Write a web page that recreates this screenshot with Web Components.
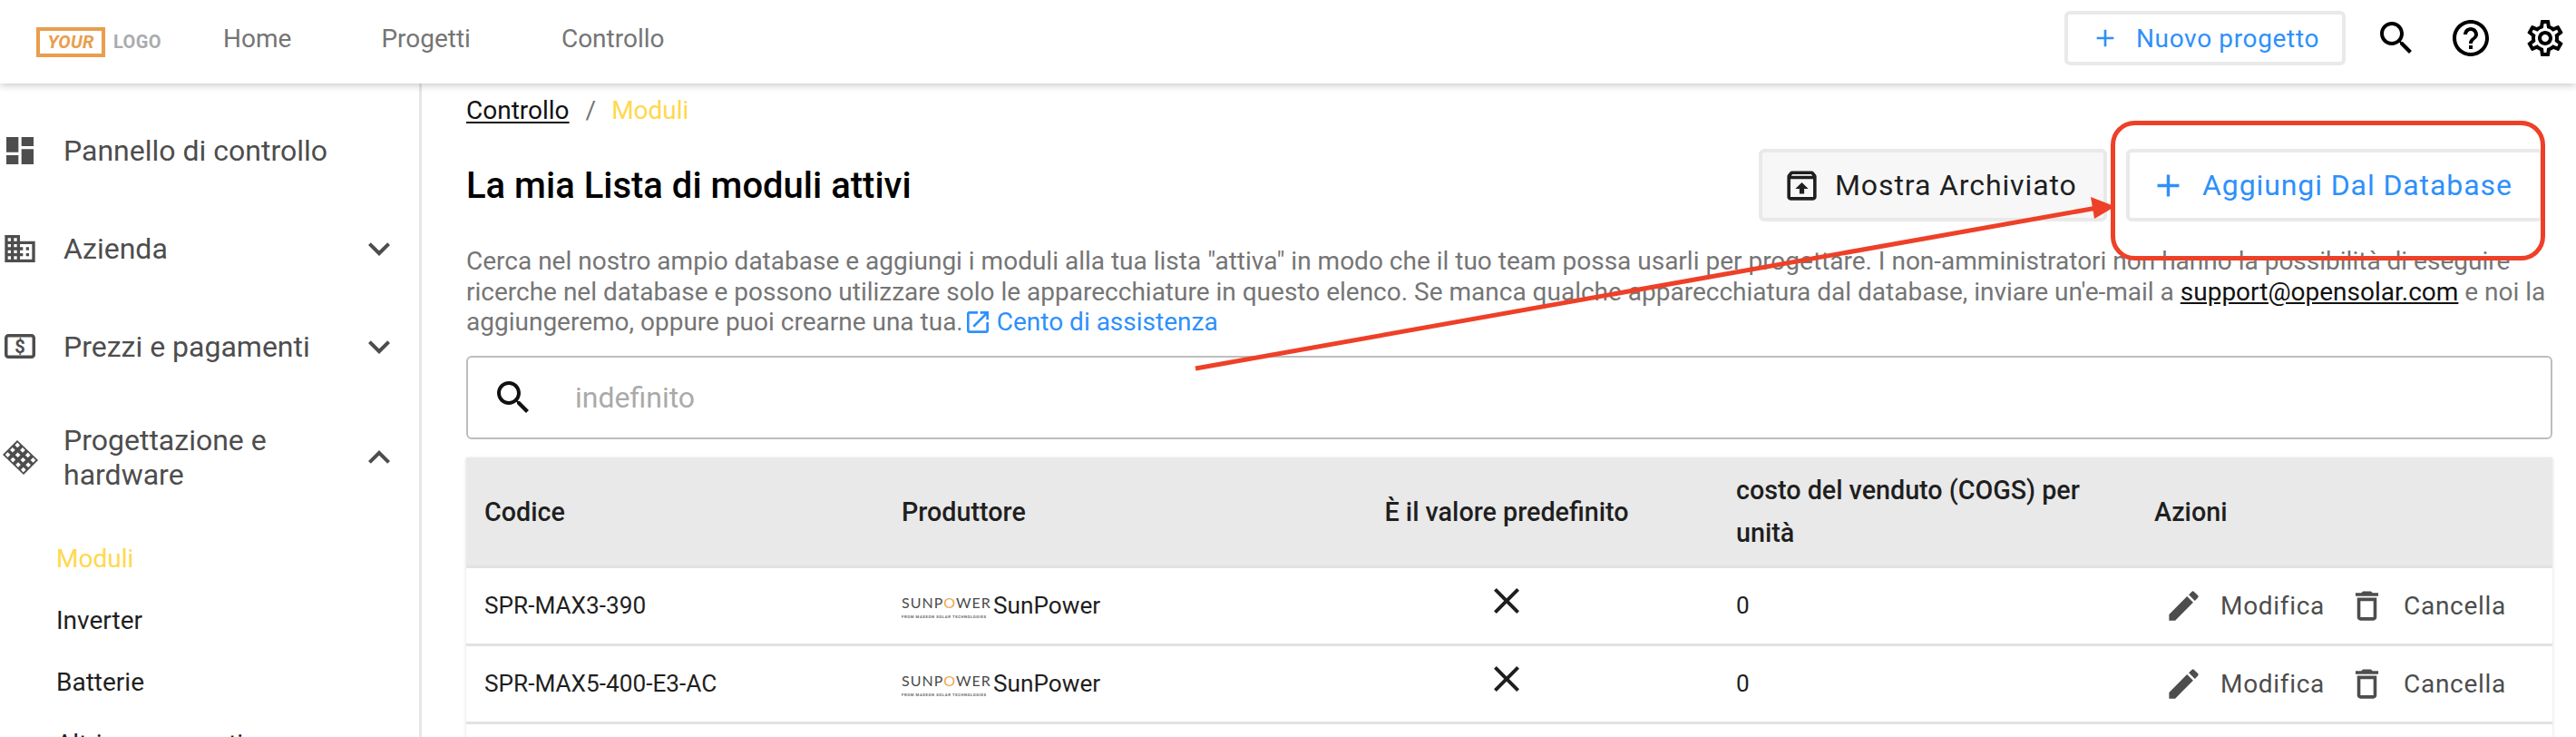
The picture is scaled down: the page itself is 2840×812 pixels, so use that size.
<!DOCTYPE html>
<html><head><meta charset="utf-8"><style>
html,body{margin:0;padding:0;background:#fff;height:812px;overflow:hidden}
body{font-family:Roboto,"Liberation Sans",sans-serif}
</style></head><body>
<app-shell></app-shell>
<script>
const I={
 plus:'<path d="M19 13h-6v6h-2v-6H5v-2h6V5h2v6h6v2z"/>',
 search:'<path d="M15.5 14h-.79l-.28-.27C15.41 12.59 16 11.11 16 9.5 16 5.91 13.09 3 9.5 3S3 5.91 3 9.5 5.91 16 9.5 16c1.61 0 3.09-.59 4.23-1.57l.27.28v.79l5 4.99L20.49 19l-4.99-5zm-6 0C7.01 14 5 11.99 5 9.5S7.01 5 9.5 5 14 7.01 14 9.5 11.99 14 9.5 14z"/>',
 help:'<path d="M11 18h2v-2h-2v2zm1-16C6.48 2 2 6.48 2 12s4.48 10 10 10 10-4.48 10-10S17.52 2 12 2zm0 18c-4.41 0-8-3.59-8-8s3.59-8 8-8 8 3.59 8 8-3.59 8-8 8zm0-14c-2.21 0-4 1.79-4 4h2c0-1.1.9-2 2-2s2 .9 2 2c0 2-3 1.75-3 5h2c0-2.25 3-2.5 3-5 0-2.21-1.79-4-4-4z"/>',
 gear:'<path d="M19.43 12.98c.04-.32.07-.64.07-.98s-.03-.66-.07-.98l2.11-1.65c.19-.15.24-.42.12-.64l-2-3.46c-.12-.22-.39-.3-.61-.22l-2.49 1c-.52-.4-1.08-.73-1.69-.98l-.38-2.65C14.46 2.18 14.25 2 14 2h-4c-.25 0-.46.18-.49.42l-.38 2.65c-.61.25-1.17.59-1.69.98l-2.49-1c-.23-.09-.49 0-.61.22l-2 3.46c-.13.22-.07.49.12.64l2.11 1.65c-.04.32-.07.65-.07.98s.03.66.07.98l-2.11 1.65c-.19.15-.24.42-.12.64l2 3.46c.12.22.39.3.61.22l2.49-1c.52.4 1.08.73 1.69.98l.38 2.65c.03.24.24.42.49.42h4c.25 0 .46-.18.49-.42l.38-2.65c.61-.25 1.17-.59 1.69-.98l2.49 1c.23.09.49 0 .61-.22l2-3.46c.12-.22.07-.49-.12-.64l-2.11-1.65zM17.45 11.27c.04.31.05.52.05.73s-.02.43-.05.73l-.14 1.13.89.7 1.08.84-.7 1.21-1.27-.51-1.04-.42-.9.68c-.43.32-.84.56-1.25.73l-1.06.43-.16 1.13-.2 1.35h-1.4l-.19-1.35-.16-1.13-1.06-.43c-.43-.18-.83-.41-1.23-.71l-.91-.7-1.06.43-1.27.51-.7-1.21 1.08-.84.89-.7-.14-1.13c-.03-.31-.05-.54-.05-.74s.02-.43.05-.73l.14-1.13-.89-.7-1.08-.84.7-1.21 1.27.51 1.04.42.9-.68c.43-.32.84-.56 1.25-.73l1.06-.43.16-1.13.2-1.35h1.39l.19 1.35.16 1.13 1.06.43c.43.18.83.41 1.23.71l.91.7 1.06-.43 1.27-.51.7 1.21-1.07.85-.89.7.14 1.13zM12 8c-2.21 0-4 1.79-4 4s1.79 4 4 4 4-1.79 4-4-1.79-4-4-4zm0 6c-1.1 0-2-.9-2-2s.9-2 2-2 2 .9 2 2-.9 2-2 2z"/>',
 dash:'<path d="M3 13h8V3H3v10zm0 8h8v-6H3v6zm10 0h8V11h-8v10zm0-18v6h8V3h-8z"/>',
 biz:'<path d="M12 7V3H2v18h20V7H12zM6 19H4v-2h2v2zm0-4H4v-2h2v2zm0-4H4V9h2v2zm0-4H4V5h2v2zm4 12H8v-2h2v2zm0-4H8v-2h2v2zm0-4H8V9h2v2zm0-4H8V5h2v2zm10 12h-8v-2h2v-2h-2v-2h2v-2h-2V9h8v10zm-2-8h-2v2h2v-2zm0 4h-2v2h2v-2z"/>',
 down:'<path d="M7.41 8.59L12 13.17l4.59-4.58L18 10l-6 6-6-6z"/>',
 up:'<path d="M7.41 15.41L12 10.83l4.59 4.58L18 14l-6-6-6 6z"/>',
 open:'<path d="M19 19H5V5h7V3H5c-1.11 0-2 .9-2 2v14c0 1.1.89 2 2 2h14c1.1 0 2-.9 2-2v-7h-2v7zM14 3v2h3.59l-9.83 9.83 1.41 1.41L19 6.41V10h2V3h-7z"/>',
 x:'<path d="M19 6.41L17.59 5 12 10.59 6.41 5 5 6.41 10.59 12 5 17.59 6.41 19 12 13.41 17.59 19 19 17.59 13.41 12z"/>',
 edit:'<path d="M3 17.25V21h3.75L17.81 9.94l-3.75-3.75L3 17.25zM20.71 7.04c.39-.39.39-1.02 0-1.41l-2.34-2.34c-.39-.39-1.02-.39-1.41 0l-1.83 1.83 3.75 3.75 1.83-1.83z"/>',
 trash:'<path d="M6 19c0 1.1.9 2 2 2h8c1.1 0 2-.9 2-2V7H6v12zM8 9h8v10H8V9zm7.5-5l-1-1h-5l-1 1H5v2h14V4h-3.5z"/>'
};
const svg=(n,s,c='currentColor')=>`<svg width="${s}" height="${s}" viewBox="0 0 24 24" fill="${c}" style="display:block;flex:none">${I[n]}</svg>`;
function def(name,html){customElements.define(name,class extends HTMLElement{constructor(){super();this.attachShadow({mode:'open'}).innerHTML=typeof html==='function'?html(this):html;}})}

const panelHoles=()=>{let s='';const T=[17,1],u=[23,22],v=[-16,16];
 for(let i=0;i<4;i++)for(let j=0;j<3;j++){const x=T[0]+(i+.5)/4*u[0]+(j+.5)/3*v[0],y=T[1]+(i+.5)/4*u[1]+(j+.5)/3*v[1];
  s+=`<path d="M${x} ${y-2.8}L${x+2.8} ${y}L${x} ${y+2.8}L${x-2.8} ${y}Z"/>`;}
 return s;};

def('your-logo',`<style>:host{display:flex;align-items:center;gap:9px;font:italic 700 20px Roboto,sans-serif}
.b{box-sizing:border-box;width:76px;height:33px;border:4px solid #E99E4C;color:#E99E4C;display:flex;align-items:center;justify-content:center;letter-spacing:.2px}
.l{font-style:normal;color:#A9ABAE;letter-spacing:.4px}</style><span class="b">YOUR</span><span class="l">LOGO</span>`);

def('top-bar',`<style>:host{display:flex;align-items:center;height:92px;box-sizing:border-box;padding-left:40px;background:#fff;box-shadow:0 2px 8px rgba(0,0,0,.22);position:relative;z-index:2;font:400 28px Roboto,sans-serif;color:#757575}
nav{display:flex;margin-left:68px;gap:99px;margin-top:-7px}
nav span:last-child{margin-left:1px}
.r{margin-left:auto;display:flex;align-items:center}
.new{box-sizing:border-box;width:310px;height:60px;border:4px solid #E9E9E9;border-radius:6px;display:flex;align-items:center;gap:18px;padding-left:25px;color:#2E90FA;margin-top:-8px;letter-spacing:.65px}
.ic{display:flex;color:#000;margin-top:-8px;margin-left:32px;gap:34px;padding-right:10px}</style>
<your-logo></your-logo><nav><span>Home</span><span>Progetti</span><span>Controllo</span></nav>
<div class="r"><div class="new">${svg('plus',32)}<span>Nuovo progetto</span></div>
<div class="ic">${svg('search',48)}${svg('help',48)}${svg('gear',48)}</div></div>`);

def('side-item',h=>{const ic=h.getAttribute('icon'),ch=h.getAttribute('chev');
 const icon=ic==='money'?`<svg width="38" height="38" viewBox="0 0 38 38" style="display:block"><rect x="4.75" y="6.75" width="30.5" height="23.5" rx="2.5" fill="none" stroke="#4D4D4D" stroke-width="3.5"/><text x="20" y="26" text-anchor="middle" font-family="Roboto" font-weight="700" font-size="20" fill="#4D4D4D">$</text></svg>`
 :ic==='panel'?`<svg width="44" height="40" viewBox="0 0 44 40" style="display:block"><path fill="#4D4D4D" d="M17 1 40 23 24 39 1 17Z"/><g fill="#fff">${panelHoles()}</g></svg>`
 :svg(ic,40,'#4D4D4D');
 return `<style>:host{display:flex;align-items:center;height:108px;box-sizing:border-box;padding-left:2px;padding-right:20px;color:#4D4D4D;font:400 32px/38px Roboto,sans-serif}
 .i{width:40px;flex:none}.t{margin-left:28px;flex:1}.c{flex:none}</style><div class="i">${icon}</div><div class="t"><slot></slot></div>${ch?`<div class="c">${svg(ch,48,'#4D4D4D')}</div>`:''}`});

def('side-sub',`<style>:host{display:flex;align-items:center;height:68px;padding-left:62px;font:400 28px Roboto,sans-serif;color:var(--c,#1f1f1f)}</style><slot></slot>`);

def('side-bar',`<style>:host{display:block;box-sizing:border-box;width:465px;flex:none;border-right:3px solid #E6E6E6;height:720px;overflow:hidden;padding-top:20px}
.sp{height:9px}side-item.tall{height:136px}</style>
<side-item icon="dash">Pannello di controllo</side-item>
<side-item icon="biz" chev="down">Azienda</side-item>
<side-item icon="money" chev="down">Prezzi e pagamenti</side-item>
<side-item class="tall" icon="panel" chev="up">Progettazione e<br>hardware</side-item>
<div class="sp"></div>
<side-sub style="--c:#FFD84D">Moduli</side-sub><side-sub>Inverter</side-sub><side-sub>Batterie</side-sub><side-sub>Altri componenti</side-sub>`);

def('bread-crumb',`<style>:host{display:flex;align-items:center;height:58px;font:400 28px Roboto,sans-serif;color:#757575;gap:18px}
a{color:#111;text-decoration:underline;text-underline-offset:3px}.y{color:#FFD84D;margin-left:-1px}</style><a>Controllo</a><span>/</span><span class="y">Moduli</span>`);

def('act-btn',`<style>:host{display:flex;align-items:center;box-sizing:border-box;height:80px;border:4px solid #E9E9E9;border-radius:6px;font:400 32px Roboto,sans-serif;letter-spacing:.9px}</style><slot></slot>`);

def('page-head',`<style>:host{display:flex;align-items:center;height:80px;margin-top:14px;width:2290px}
h1{margin:0;font:500 40px Roboto,sans-serif;color:#000;flex:1}
.g{display:flex;gap:21px}
.a{width:384px;background:#F7F7F7;color:#1f1f1f;padding-left:22px;box-sizing:border-box;gap:15px}
.b{width:460px;color:#2E90FA;padding-left:22px;box-sizing:border-box;gap:17px}</style>
<h1>La mia Lista di moduli attivi</h1>
<div class="g"><act-btn class="a"><svg width="43" height="43" viewBox="0 0 24 24" fill="#1f1f1f" style="flex:none;display:block"><path d="M20.54 5.23l-1.39-1.68C18.88 3.21 18.47 3 18 3H6c-.47 0-.88.21-1.16.55L3.46 5.23C3.17 5.57 3 6.02 3 6.5V19c0 1.1.9 2 2 2h14c1.1 0 2-.9 2-2V6.5c0-.48-.17-.93-.46-1.27zM6.24 5h11.52l.83 1H5.42l.82-1zM5 19V8h14v11H5zm7-9l-4 4h2.55v3h2.9v-3H16z"/></svg><span>Mostra Archiviato</span></act-btn>
<act-btn class="b">${svg('plus',41)}<span>Aggiungi Dal Database</span></act-btn></div>`);

def('info-text',`<style>:host{display:block;margin-top:27px;font:400 28px/33.5px Roboto,sans-serif;color:#757575;white-space:nowrap}
a{color:#111;text-decoration:underline}.h{color:#2E90FA;display:inline-flex;align-items:center;gap:5px;vertical-align:bottom}</style>
Cerca nel nostro ampio database e aggiungi i moduli alla tua lista "attiva" in modo che il tuo team possa usarli per progettare. I non-amministratori non hanno la possibilità di eseguire<br>
ricerche nel database e possono utilizzare solo le apparecchiature in questo elenco. Se manca qualche apparecchiatura dal database, inviare un'e-mail a <a>support@opensolar.com</a> e noi la<br>
aggiungeremo, oppure puoi crearne una tua.<span class="h">${svg('open',32)}<span>Cento di assistenza</span></span>`);

def('search-box',`<style>:host{display:flex;align-items:center;box-sizing:border-box;width:2300px;height:92px;margin-top:20px;border:2px solid #BDBDBD;border-radius:6px;font:400 32px Roboto,sans-serif;color:#AAA}
span{margin-left:44px}</style><div style="margin-left:26px;color:#111">${svg('search',48)}</div><span>indefinito</span>`);

const cols='460px 480px 414px 507px 1fr';
def('table-head',`<style>:host{display:grid;grid-template-columns:${cols};align-items:center;height:122px;box-sizing:border-box;padding-top:2px;background:#E9E9E9;border-bottom:3px solid #E2E2E2;font:500 28.7px/47px Roboto,sans-serif;color:#1f1f1f}
div{padding-left:20px}.c{padding:0;text-align:center}</style>
<div>Codice</div><div style="padding-left:20px">Produttore</div><div class="c">È il valore predefinito</div><div style="padding-left:46px;white-space:nowrap">costo del venduto (COGS) per<br>unità</div><div style="padding-left:0">Azioni</div>`);

def('sun-logo',`<style>:host{display:block;flex:none;width:97px;height:31px;color:#4a4a4a;white-space:nowrap}
.s{font:400 16px/16px Lato,Roboto,sans-serif;letter-spacing:1px;margin-top:4px}.s b{font-weight:400;color:#F3A64B}
.t{font:700 4.2px/6px Roboto,sans-serif;letter-spacing:.6px;margin-top:5px;color:#666}</style><div class="s">SUNP<b>O</b>WER</div><div class="t">FROM MAXEON SOLAR TECHNOLOGIES</div>`);

def('table-row',h=>`<style>:host{display:grid;grid-template-columns:${cols};align-items:center;height:86px;box-sizing:border-box;border-bottom:3px solid #E2E2E2;font:400 26.2px Roboto,sans-serif;color:#1f1f1f;background:#fff}
.p{display:flex;align-items:center;gap:4px;padding-left:20px}.x{display:flex;justify-content:center;color:#1f1f1f;margin-top:-10px}
.a{display:flex;align-items:center;color:#4D4D4D;margin-left:11px;font-size:28px;letter-spacing:.7px}</style>
<div style="padding-left:20px">${h.getAttribute('code')}</div><div class="p"><sun-logo></sun-logo><span>SunPower</span></div><div class="x">${svg('x',48)}</div><div style="padding-left:46px">0</div>
<div class="a">${svg('edit',43)}<span style="margin-left:19px">Modifica</span><span style="margin-left:25px">${svg('trash',43)}</span><span style="margin-left:19px">Cancella</span></div>`);

def('data-table',`<style>:host{display:block;width:2300px;margin-top:20px;box-shadow:0 1px 4px rgba(0,0,0,.14)}</style><table-head></table-head><table-row code="SPR-MAX3-390"></table-row><table-row code="SPR-MAX5-400-E3-AC"></table-row><div style="height:80px;background:#fff"></div>`);

def('call-out',`<style>:host{position:absolute;left:0;top:0;width:2840px;height:812px;pointer-events:none;z-index:5}svg{display:block}</style>
<svg width="2840" height="812" viewBox="0 0 2840 812"><rect x="2329.5" y="135.5" width="474" height="149" rx="24" fill="none" stroke="#EE4028" stroke-width="5"/><line x1="1318" y1="406" x2="2312" y2="229" stroke="#EE4028" stroke-width="5"/><path d="M2332 227.5 2305 217 2309 241Z" fill="#EE4028"/></svg>`);

def('app-shell',`<style>:host{display:block;position:relative;width:2840px;height:812px;overflow:hidden}
.b{display:flex;height:720px}main{flex:1;padding-left:49px;min-width:0}</style>
<top-bar></top-bar><div class="b"><side-bar></side-bar><main><bread-crumb></bread-crumb><page-head></page-head><info-text></info-text><search-box></search-box><data-table></data-table></main></div><call-out></call-out>`);
</script></body></html>
